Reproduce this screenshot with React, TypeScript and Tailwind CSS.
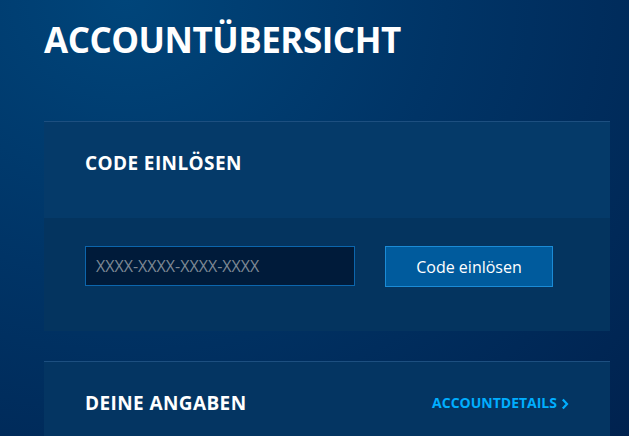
import React from "react";

export default function App() {
  return (
    <div
      className="w-[629px] h-[436px] overflow-hidden bg-[radial-gradient(ellipse_at_20%_0%,#00457a_0%,#003466_45%,#00224f_100%)]"
      style={{ fontFamily: '"Open Sans", "Liberation Sans", sans-serif' }}
    >
      <div className="pl-[44px] pt-[18px]">
        <h1 className="text-[35px] font-bold text-white leading-[44px] tracking-[-0.5px]">
          ACCOUNTÜBERSICHT
        </h1>
      </div>
      <div className="ml-[44px] w-[566px] mt-[59px] border-t border-[#1d4f80] bg-[#04345f]">
        <div className="h-[96px] bg-[#053a69] pl-[41px] pt-[28px]">
          <h2 className="text-[19px] font-bold text-white leading-[26px] tracking-[0.4px]">
            CODE EINLÖSEN
          </h2>
        </div>
        <div className="flex items-start pl-[41px] pt-[28px] h-[113px]">
          <div className="w-[270px] h-[40px] border border-[#0c66ad] bg-[#001b3a] flex items-center pl-[10px]">
            <span className="text-[16px] text-[#7d8894]">XXXX-XXXX-XXXX-XXXX</span>
          </div>
          <button className="ml-[30px] w-[168px] h-[41px] border border-[#1b8bd6] bg-[#005b9d] text-white text-[16px] flex items-center justify-center">
            Code einlösen
          </button>
        </div>
      </div>
      <div className="ml-[44px] w-[566px] mt-[30px] border-t border-[#1d4f80] bg-[#043562] h-[80px] flex items-start justify-between pl-[41px] pr-[41px] pt-[28px]">
        <h2 className="text-[19px] font-bold text-white leading-[26px] tracking-[0.4px]">
          DEINE ANGABEN
        </h2>
        <a className="text-[14px] font-bold text-[#00aeff] leading-[26px] flex items-center gap-[4px]">
          ACCOUNTDETAILS
          <svg width="8" height="12" viewBox="0 0 8 12" className="mt-[1px]">
            <path d="M1.8 1.5 L6 6 L1.8 10.5" stroke="#00aeff" strokeWidth="2.2" fill="none" />
          </svg>
        </a>
      </div>
    </div>
  );
}
